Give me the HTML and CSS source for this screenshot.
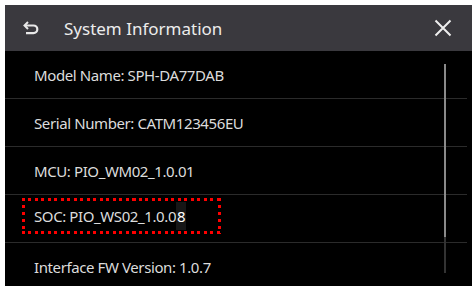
FILE: index.html
```html
<!DOCTYPE html>
<html lang="en">
<head>
    <meta charset="UTF-8">
    <title>System Information</title>
    <link rel="stylesheet" href="styles.css">
</head>
<body>
    <div class="screen">
        <div class="header">
            <svg class="back-icon" width="16" height="14" viewBox="0 0 16 14">
                <path d="M5 1 L1.5 4.5 L5 8" fill="none" stroke="#e8e8e8" stroke-width="2"/>
                <path d="M2 4.5 H10.5 A3.8 3.8 0 0 1 10.5 12.1 H3" fill="none" stroke="#e8e8e8" stroke-width="2.2"/>
            </svg>
            <h1 class="title">System Information</h1>
            <svg class="close-icon" width="18" height="18" viewBox="0 0 18 18">
                <path d="M1.5 1.5 L16.5 16.5 M16.5 1.5 L1.5 16.5" stroke="#eee" stroke-width="2"/>
            </svg>
        </div>

        <div class="list">
            <div class="row">Model Name: SPH-DA77DAB</div>
            <div class="row">Serial Number: CATM123456EU</div>
            <div class="row">MCU: PIO_WM02_1.0.01</div>
            <div class="row">
                <span class="marked">SOC: PIO_WS02_1.0.0<span class="caret">8</span></span>
            </div>
            <div class="row last">Interface FW Version: 1.0.7</div>

            <div class="scrollbar">
                <div class="thumb"></div>
            </div>
        </div>
    </div>
</body>
</html>
```

FILE: styles.css
```css
* {
    margin: 0;
    padding: 0;
    box-sizing: border-box;
}

body {
    background: #fff;
    padding: 5px;
    font-family: 'Noto Sans', 'Open Sans', sans-serif;
}

.screen {
    width: 467px;
    height: 281px;
    background: #000;
    overflow: hidden;
}

.header {
    height: 46px;
    background: #3a393e;
    display: flex;
    align-items: center;
    padding-left: 18px;
    padding-right: 20px;
}

.back-icon {
    margin-right: 25px;
}

.title {
    flex: 1;
    color: #ececec;
    font-size: 17px;
    font-weight: normal;
}

.list {
    position: relative;
}

.row {
    height: 48px;
    border-bottom: 1px solid #2b2b2b;
    margin-right: 5px;
    display: flex;
    align-items: center;
    padding-left: 29px;
    color: #dcdcdc;
    font-size: 15px;
    letter-spacing: -0.4px;
}

.row.last {
    border-bottom: none;
}

/* square red dots drawn as four striped edges */
.marked {
    margin-left: -12px;
    margin-top: -5px;
    width: 199px;
    padding: 8px 0 8px 12px;
    background:
        repeating-linear-gradient(90deg, #f00 0 3px, transparent 3px 6.5px) top left / 100% 3px no-repeat,
        repeating-linear-gradient(90deg, #f00 0 3px, transparent 3px 6.5px) bottom left / 100% 3px no-repeat,
        repeating-linear-gradient(180deg, #f00 0 3px, transparent 3px 7px) top left / 3px 100% no-repeat,
        repeating-linear-gradient(180deg, #f00 0 3px, transparent 3px 7px) top right / 3px 100% no-repeat;
}

.caret {
    color: #fff;
    background: #161616;
    padding: 4px 1px;
}

.scrollbar {
    position: absolute;
    left: 439px;
    top: 13px;
    width: 2px;
    height: 209px;
    background: #333;
}

.thumb {
    height: 173px;
    background: #8a8a8a;
}
```
